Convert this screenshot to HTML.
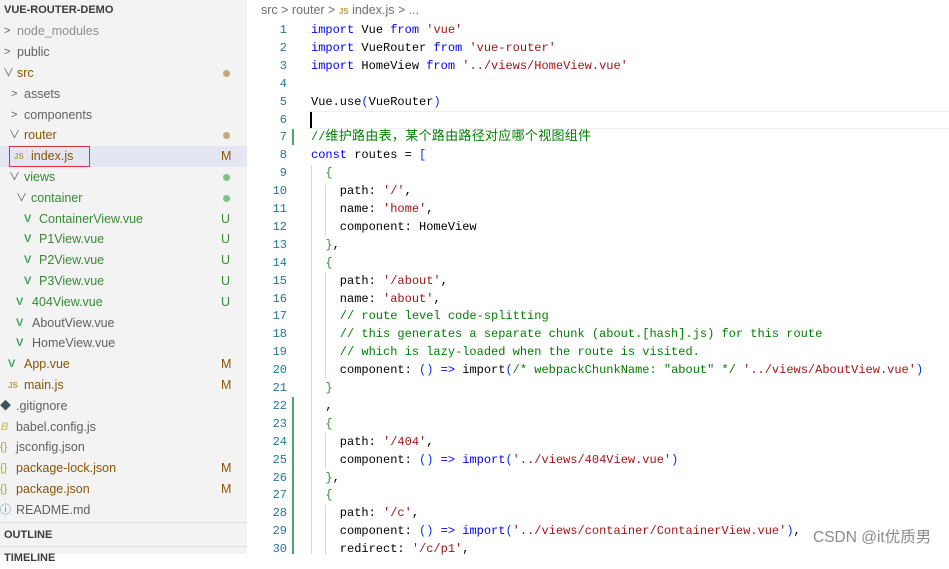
<!DOCTYPE html>
<html><head><meta charset="utf-8"><style>
*{margin:0;padding:0;box-sizing:border-box}
body{width:949px;height:554px;overflow:hidden;background:#fff;position:relative;font-family:"Liberation Sans","Noto Sans CJK SC",sans-serif}
#side{position:absolute;left:0;top:0;width:247px;height:554px;background:#f3f3f3}
.r{position:absolute;left:0;width:247px;height:21px;line-height:21px;font-size:12.5px;white-space:nowrap;color:#616161}
.r .c{position:absolute;top:0;font-size:11px;color:#616161}
.r .t{position:absolute;top:0}
.r .b{position:absolute;left:221px;top:0;font-size:12.5px}
.dot{position:absolute;left:223px;top:7px;width:7px;height:7px;border-radius:50%}
.br{color:#895503}.gr{color:#388a34}.gy{color:#8e8e90}
.vi{position:absolute;top:0;color:#41a05a;font-size:11px;font-weight:bold}
.js{position:absolute;top:0;color:#b3a13a;font-size:8px;font-weight:bold}
#code{position:absolute;left:247px;top:21px;font-family:"Liberation Mono","Noto Sans CJK SC",monospace;font-size:12px}
.l{position:absolute;left:0;height:18px;line-height:18px;white-space:pre;width:702px}
.n{position:absolute;left:0;width:40px;text-align:right;color:#237893}
.x{position:absolute;left:64px}
.k{color:#0000ff}.s{color:#a31515}.cm{color:#008000}.p{color:#319331}.q{color:#0431fa}.v{color:#001080}
</style></head><body>
<div id="side">
<div class="r" style="top:0;font-weight:bold;font-size:11px;color:#3b3b3b"><span class="t" style="left:4px">VUE-ROUTER-DEMO</span></div>
<div class="r" style="top:21px"><span class="c" style="left:4px">&gt;</span><span class="t gy" style="left:17px">node_modules</span></div>
<div class="r" style="top:42px"><span class="c" style="left:4px">&gt;</span><span class="t" style="left:17px">public</span></div>
<div class="r" style="top:63px"><span class="c" style="left:3px">&#8744;</span><span class="t br" style="left:17px">src</span><span class="dot" style="background:#c8a77a"></span></div>
<div class="r" style="top:84px"><span class="c" style="left:11px">&gt;</span><span class="t" style="left:24px">assets</span></div>
<div class="r" style="top:105px"><span class="c" style="left:11px">&gt;</span><span class="t" style="left:24px">components</span></div>
<div class="r" style="top:125px"><span class="c" style="left:9px">&#8744;</span><span class="t br" style="left:24px">router</span><span class="dot" style="background:#c8a77a"></span></div>
<div class="r" style="top:146px;background:#e4e6f1"><div style="position:absolute;left:9px;top:0;width:81px;height:21px;border:1.5px solid #e0303a"></div><span class="js" style="left:14px">JS</span><span class="t br" style="left:31px">index.js</span><span class="b br">M</span></div>
<div class="r" style="top:167px"><span class="c" style="left:9px">&#8744;</span><span class="t gr" style="left:24px">views</span><span class="dot" style="background:#7cc48a"></span></div>
<div class="r" style="top:188px"><span class="c" style="left:16px">&#8744;</span><span class="t gr" style="left:31px">container</span><span class="dot" style="background:#7cc48a"></span></div>
<div class="r" style="top:209px"><span class="vi" style="left:24px">V</span><span class="t gr" style="left:39px">ContainerView.vue</span><span class="b gr">U</span></div>
<div class="r" style="top:229px"><span class="vi" style="left:24px">V</span><span class="t gr" style="left:39px">P1View.vue</span><span class="b gr">U</span></div>
<div class="r" style="top:250px"><span class="vi" style="left:24px">V</span><span class="t gr" style="left:39px">P2View.vue</span><span class="b gr">U</span></div>
<div class="r" style="top:271px"><span class="vi" style="left:24px">V</span><span class="t gr" style="left:39px">P3View.vue</span><span class="b gr">U</span></div>
<div class="r" style="top:292px"><span class="vi" style="left:16px">V</span><span class="t gr" style="left:32px">404View.vue</span><span class="b gr">U</span></div>
<div class="r" style="top:313px"><span class="vi" style="left:16px">V</span><span class="t" style="left:32px">AboutView.vue</span></div>
<div class="r" style="top:333px"><span class="vi" style="left:16px">V</span><span class="t" style="left:32px">HomeView.vue</span></div>
<div class="r" style="top:354px"><span class="vi" style="left:8px">V</span><span class="t br" style="left:24px">App.vue</span><span class="b br">M</span></div>
<div class="r" style="top:375px"><span class="js" style="left:8px">JS</span><span class="t br" style="left:24px">main.js</span><span class="b br">M</span></div>
<div class="r" style="top:396px"><span class="c" style="left:0;color:#41535b">&#9670;</span><span class="t" style="left:16px">.gitignore</span></div>
<div class="r" style="top:417px"><span class="c" style="left:1px;color:#b7c24a;font-style:italic">B</span><span class="t" style="left:16px">babel.config.js</span></div>
<div class="r" style="top:437px"><span class="c" style="left:0;color:#b3a13a">{}</span><span class="t" style="left:16px">jsconfig.json</span></div>
<div class="r" style="top:458px"><span class="c" style="left:0;color:#b3a13a">{}</span><span class="t br" style="left:16px">package-lock.json</span><span class="b br">M</span></div>
<div class="r" style="top:479px"><span class="c" style="left:0;color:#b3a13a">{}</span><span class="t br" style="left:16px">package.json</span><span class="b br">M</span></div>
<div class="r" style="top:500px"><span class="c" style="left:0;color:#4a7fb5">&#9432;</span><span class="t" style="left:16px">README.md</span></div>
<div style="position:absolute;left:0;top:522px;width:247px;height:1px;background:#e0e0e0"></div>
<div class="r" style="top:525px;font-weight:bold;font-size:11px;color:#3b3b3b"><span class="t" style="left:4px">OUTLINE</span></div>
<div style="position:absolute;left:0;top:546px;width:247px;height:1px;background:#e0e0e0"></div>
<div class="r" style="top:548px;font-weight:bold;font-size:11px;color:#3b3b3b"><span class="t" style="left:4px">TIMELINE</span></div>
</div>
<div style="position:absolute;left:261px;top:3px;font-size:12.5px;color:#6f6f6f;white-space:nowrap">src &gt; router &gt; <span style="color:#b3a13a;font-size:8px;font-weight:bold">JS</span> index.js &gt; ...</div>
<div style="position:absolute;left:308px;top:111px;width:641px;height:18px;border-top:1px solid #eee;border-bottom:1px solid #eee"></div>
<div style="position:absolute;left:310px;top:112px;width:1.5px;height:16px;background:#000"></div>
<div style="position:absolute;left:292px;top:129px;width:2px;height:16px;background:#48a868"></div>
<div style="position:absolute;left:292px;top:397px;width:2px;height:157px;background:#48a868"></div>
<div style="position:absolute;left:311px;top:165px;width:1px;height:389px;background:#d8d8d8"></div>
<div style="position:absolute;left:325px;top:183px;width:1px;height:53px;background:#d8d8d8"></div>
<div style="position:absolute;left:325px;top:272px;width:1px;height:107px;background:#d8d8d8"></div>
<div style="position:absolute;left:325px;top:433px;width:1px;height:36px;background:#d8d8d8"></div>
<div style="position:absolute;left:325px;top:505px;width:1px;height:49px;background:#d8d8d8"></div>
<div id="code">
<div class="l" style="top:0"><span class="n">1</span><span class="x"><span class="k">import</span> Vue <span class="k">from</span> <span class="s">'vue'</span></span></div>
<div class="l" style="top:17.9px"><span class="n">2</span><span class="x"><span class="k">import</span> VueRouter <span class="k">from</span> <span class="s">'vue-router'</span></span></div>
<div class="l" style="top:35.8px"><span class="n">3</span><span class="x"><span class="k">import</span> HomeView <span class="k">from</span> <span class="s">'../views/HomeView.vue'</span></span></div>
<div class="l" style="top:53.7px"><span class="n">4</span></div>
<div class="l" style="top:71.6px"><span class="n">5</span><span class="x">Vue.use<span class="q">(</span>VueRouter<span class="q">)</span></span></div>
<div class="l" style="top:89.5px"><span class="n">6</span></div>
<div class="l" style="top:107.4px"><span class="n">7</span><span class="x cm">//<span style="font-size:13px;letter-spacing:0.3px">维护路由表，某个路由路径对应哪个视图组件</span></span></div>
<div class="l" style="top:125.3px"><span class="n">8</span><span class="x"><span class="k">const</span> routes = <span class="q">[</span></span></div>
<div class="l" style="top:143.2px"><span class="n">9</span><span class="x">  <span class="p">{</span></span></div>
<div class="l" style="top:161.1px"><span class="n">10</span><span class="x">    path: <span class="s">'/'</span>,</span></div>
<div class="l" style="top:179px"><span class="n">11</span><span class="x">    name: <span class="s">'home'</span>,</span></div>
<div class="l" style="top:196.9px"><span class="n">12</span><span class="x">    component: HomeView</span></div>
<div class="l" style="top:214.8px"><span class="n">13</span><span class="x">  <span class="p">}</span>,</span></div>
<div class="l" style="top:232.7px"><span class="n">14</span><span class="x">  <span class="p">{</span></span></div>
<div class="l" style="top:250.6px"><span class="n">15</span><span class="x">    path: <span class="s">'/about'</span>,</span></div>
<div class="l" style="top:268.5px"><span class="n">16</span><span class="x">    name: <span class="s">'about'</span>,</span></div>
<div class="l" style="top:286.4px"><span class="n">17</span><span class="x cm">    // route level code-splitting</span></div>
<div class="l" style="top:304.3px"><span class="n">18</span><span class="x cm">    // this generates a separate chunk (about.[hash].js) for this route</span></div>
<div class="l" style="top:322.2px"><span class="n">19</span><span class="x cm">    // which is lazy-loaded when the route is visited.</span></div>
<div class="l" style="top:340.1px"><span class="n">20</span><span class="x">    component: <span class="q">()</span> <span class="k">=&gt;</span> import<span class="q">(</span><span class="cm">/* webpackChunkName: "about" */</span> <span class="s">'../views/AboutView.vue'</span><span class="q">)</span></span></div>
<div class="l" style="top:358px"><span class="n">21</span><span class="x">  <span class="p">}</span></span></div>
<div class="l" style="top:375.9px"><span class="n">22</span><span class="x">  ,</span></div>
<div class="l" style="top:393.8px"><span class="n">23</span><span class="x">  <span class="p">{</span></span></div>
<div class="l" style="top:411.7px"><span class="n">24</span><span class="x">    path: <span class="s">'/404'</span>,</span></div>
<div class="l" style="top:429.6px"><span class="n">25</span><span class="x">    component: <span class="q">()</span> <span class="k">=&gt;</span> <span class="k">import</span><span class="q">(</span><span class="s">'../views/404View.vue'</span><span class="q">)</span></span></div>
<div class="l" style="top:447.5px"><span class="n">26</span><span class="x">  <span class="p">}</span>,</span></div>
<div class="l" style="top:465.4px"><span class="n">27</span><span class="x">  <span class="p">{</span></span></div>
<div class="l" style="top:483.3px"><span class="n">28</span><span class="x">    path: <span class="s">'/c'</span>,</span></div>
<div class="l" style="top:501.2px"><span class="n">29</span><span class="x">    component: <span class="q">()</span> <span class="k">=&gt;</span> <span class="k">import</span><span class="q">(</span><span class="s">'../views/container/ContainerView.vue'</span><span class="q">)</span>,</span></div>
<div class="l" style="top:519.1px"><span class="n">30</span><span class="x">    redirect: <span class="s">'/c/p1'</span>,</span></div>
</div>
<div style="position:absolute;left:813px;top:525px;font-size:15.5px;color:#8a8a8a;white-space:nowrap;font-family:'Liberation Sans','Noto Sans CJK SC',sans-serif">CSDN @it优质男</div>
</body></html>
